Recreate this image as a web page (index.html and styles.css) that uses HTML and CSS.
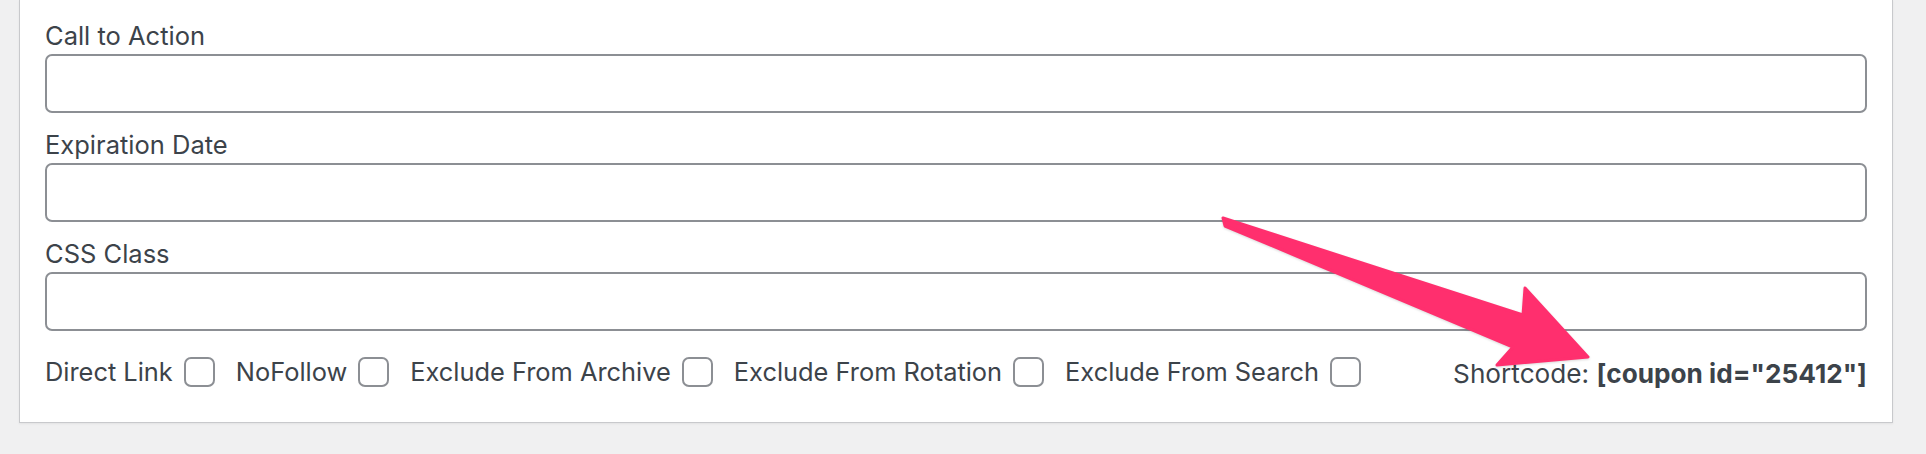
FILE: index.html
```html
<!DOCTYPE html>
<html>
<head>
<meta charset="utf-8">
<link rel="stylesheet" href="styles.css">
</head>
<body>
<div class="panel">
  <div class="field">
    <label class="field-label">Call to Action</label>
    <input class="text-input" type="text">
  </div>
  <div class="field">
    <label class="field-label">Expiration Date</label>
    <input class="text-input" type="text">
  </div>
  <div class="field">
    <label class="field-label">CSS Class</label>
    <input class="text-input" type="text">
  </div>
  <div class="options">
    <label class="option">Direct Link <input class="check" type="checkbox"></label>
    <label class="option">NoFollow <input class="check" type="checkbox"></label>
    <label class="option">Exclude From Archive <input class="check" type="checkbox"></label>
    <label class="option">Exclude From Rotation <input class="check" type="checkbox"></label>
    <label class="option">Exclude From Search <input class="check" type="checkbox"></label>
    <div class="shortcode">Shortcode: <strong>[coupon id="25412"]</strong></div>
  </div>
</div>
<svg class="arrow" width="1926" height="454" viewBox="0 0 1926 454">
  <path d="M1223,218 L1523,315 L1525,288 L1588,357 L1497,365 L1513,347 L1225,226 Z" fill="#ff2f6e" stroke="#ff2f6e" stroke-width="3" stroke-linejoin="round"/>
</svg>
</body>
</html>
```
FILE: styles.css
```css
html, body {
  margin: 0;
  padding: 0;
}
body {
  background: #f0f0f1;
  width: 1926px;
  height: 454px;
  overflow: hidden;
  position: relative;
  font-family: Inter, "Noto Sans", sans-serif;
  color: #3c434a;
}
.panel {
  margin-left: 19px;
  width: 1874px;
  box-sizing: border-box;
  background: #fff;
  border: 1px solid #c8c9cc;
  border-top: none;
  box-shadow: 0 1px 2px rgba(0,0,0,0.06);
  padding: 21px 25px 35px 25px;
}
.field {
  display: flex;
  flex-direction: column;
}
.field-label {
  font-size: 25.5px;
  line-height: 30px;
  height: 30px;
}
.text-input {
  margin: 3px 0 17px 0;
  height: 59px;
  box-sizing: border-box;
  width: 100%;
  border: 2px solid #8c8f94;
  border-radius: 7px;
  background: #fff;
  padding: 0 10px;
}
.options {
  display: flex;
  align-items: center;
  margin-top: 9px;
  height: 30px;
  font-size: 25.4px;
  line-height: 30px;
}
.option {
  display: flex;
  align-items: center;
  margin-right: 21px;
}
.check {
  appearance: none;
  -webkit-appearance: none;
  width: 31px;
  height: 30px;
  margin: 0 0 0 11px;
  box-sizing: border-box;
  border: 2px solid #8c8f94;
  border-radius: 7px;
  background: #fff;
}
.shortcode {
  margin-left: auto;
  font-size: 26.2px;
  position: relative;
  top: 2px;
}
.shortcode strong {
  font-weight: 700;
}
.arrow {
  position: absolute;
  left: 0;
  top: 0;
  filter: drop-shadow(0 1px 1px rgba(0,0,0,0.15));
}
```
